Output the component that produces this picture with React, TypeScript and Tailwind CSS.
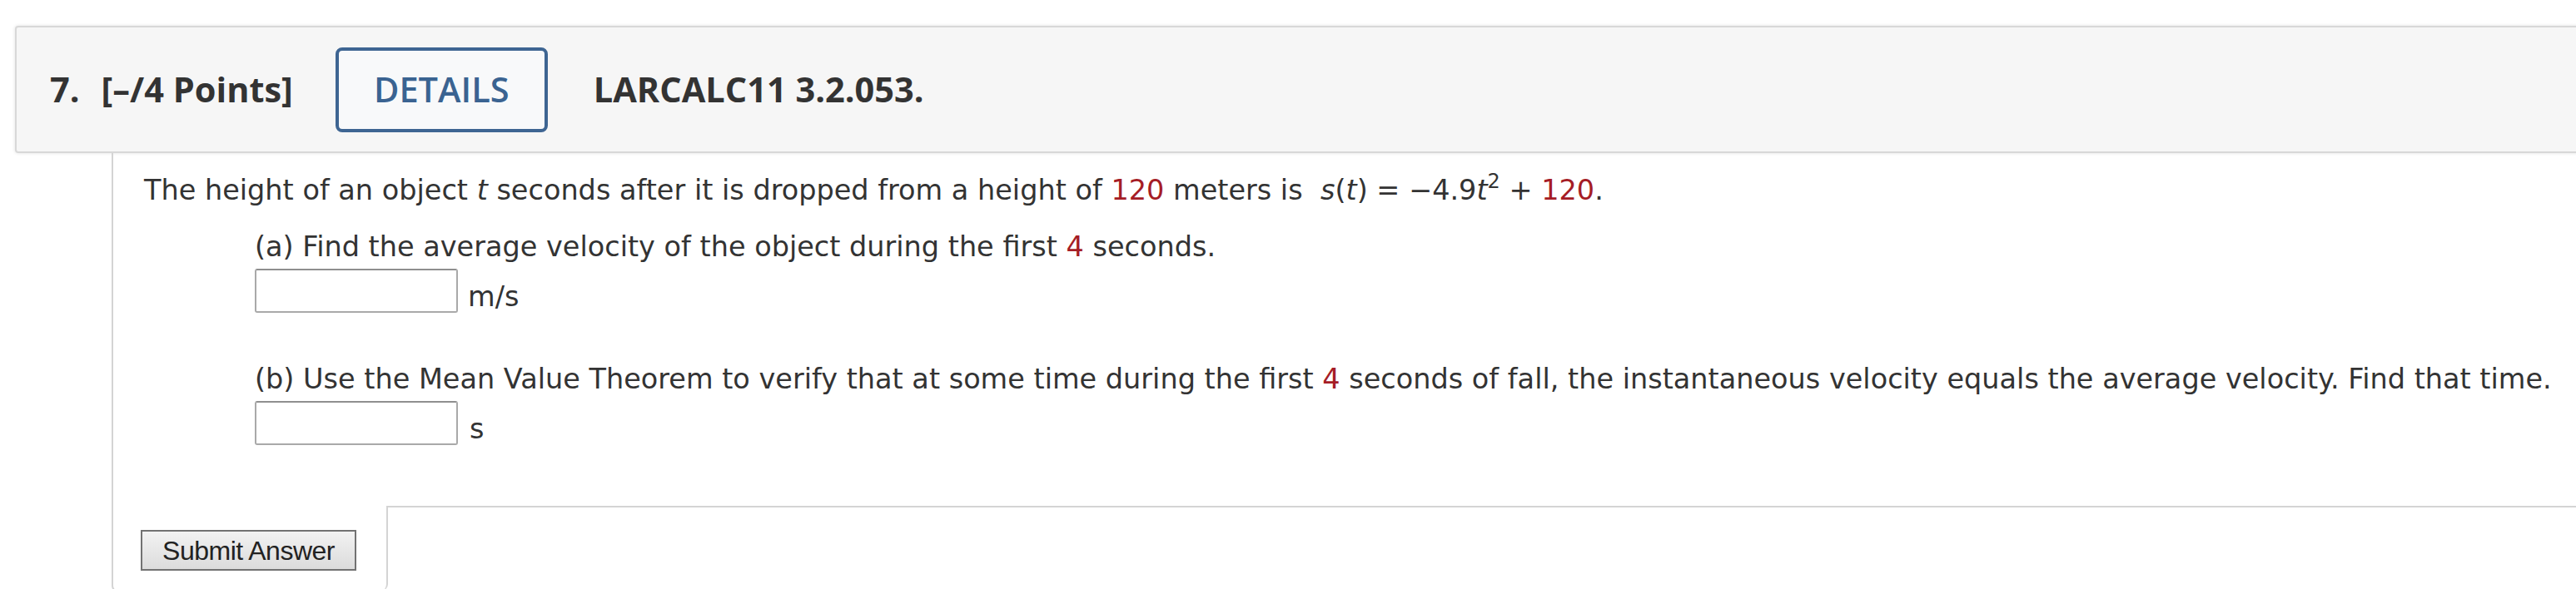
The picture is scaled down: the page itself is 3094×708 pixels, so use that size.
import React from "react";

const body = { fontFamily: '"DejaVu Sans", Verdana, sans-serif' } as React.CSSProperties;
const head = { fontFamily: '"Open Sans", sans-serif' } as React.CSSProperties;
const btn = { fontFamily: '"Liberation Sans", Arial, sans-serif' } as React.CSSProperties;

function Red({ children }: { children: React.ReactNode }) {
  return <span className="text-[#a51d26]">{children}</span>;
}

function AnswerInput() {
  return (
    <div className="w-[244px] h-[53px] border-2 border-[#a9a9a9] border-t-[#8f8f8f] rounded-[3px] bg-white shrink-0" />
  );
}

export default function App() {
  return (
    <div className="w-[3094px] h-[708px] overflow-hidden bg-white pt-[31px] pl-[18px] text-[#333]">
      <div
        style={head}
        className="w-[3110px] h-[153px] flex items-center bg-[#f6f6f6] border-2 border-[#d8d8d8] rounded-[4px] shadow-[0_0_4px_rgba(0,0,0,0.12)] pl-[40px] text-[41.5px] leading-none"
      >
        <span className="font-bold">7.</span>
        <span className="font-bold ml-[26px]">[–/4 Points]</span>
        <div className="ml-[51px] w-[255px] h-[102px] border-[4px] border-[#3e6592] rounded-[8px] flex items-center justify-center text-[#3a6391] font-semibold bg-[#f8f9fa]">
          DETAILS
        </div>
        <span className="font-bold ml-[55px]">LARCALC11 3.2.053.</span>
      </div>

      <div
        style={body}
        className="ml-[116px] h-[528px] border-l-2 border-b-2 border-[#d4d4d4] rounded-bl-[8px] flex flex-col text-[33.5px] leading-[40px]"
      >
        <div className="pl-[37px] pt-[25px] whitespace-pre">
          The height of an object <i>t</i> seconds after it is dropped from a height of <Red>120</Red> meters is  <i>s</i>(<i>t</i>) = −4.9<i>t</i>
          <sup className="text-[24px] top-[-0.6em]">2</sup> + <Red>120</Red>.
        </div>
        <div className="pl-[170px] mt-[28px]">
          (a) Find the average velocity of the object during the first <Red>4</Red> seconds.
        </div>
        <div className="pl-[170px] mt-[6px] flex items-end gap-[12px]">
          <AnswerInput />
          <span className="mb-[-1px]">m/s</span>
        </div>
        <div className="pl-[170px] mt-[60px]">
          (b) Use the Mean Value Theorem to verify that at some time during the first <Red>4</Red> seconds of fall, the instantaneous velocity equals the average velocity. Find that time.
        </div>
        <div className="pl-[170px] mt-[6px] flex items-end gap-[14px]">
          <AnswerInput />
          <span className="mb-[-1px]">s</span>
        </div>
        <div className="mt-[73px] flex flex-1">
          <div className="w-[330px] border-r-2 border-[#d4d4d4] rounded-br-[8px] pl-[33px] pt-[29px]">
            <button
              style={btn}
              className="w-[259px] h-[49px] border-2 border-[#727272] bg-gradient-to-b from-[#f2f2f2] to-[#dcdcdc] text-[32px] leading-none text-[#222] tracking-[-0.5px]"
            >
              Submit Answer
            </button>
          </div>
          <div className="flex-1 border-t-2 border-[#d4d4d4]" />
        </div>
      </div>
    </div>
  );
}
